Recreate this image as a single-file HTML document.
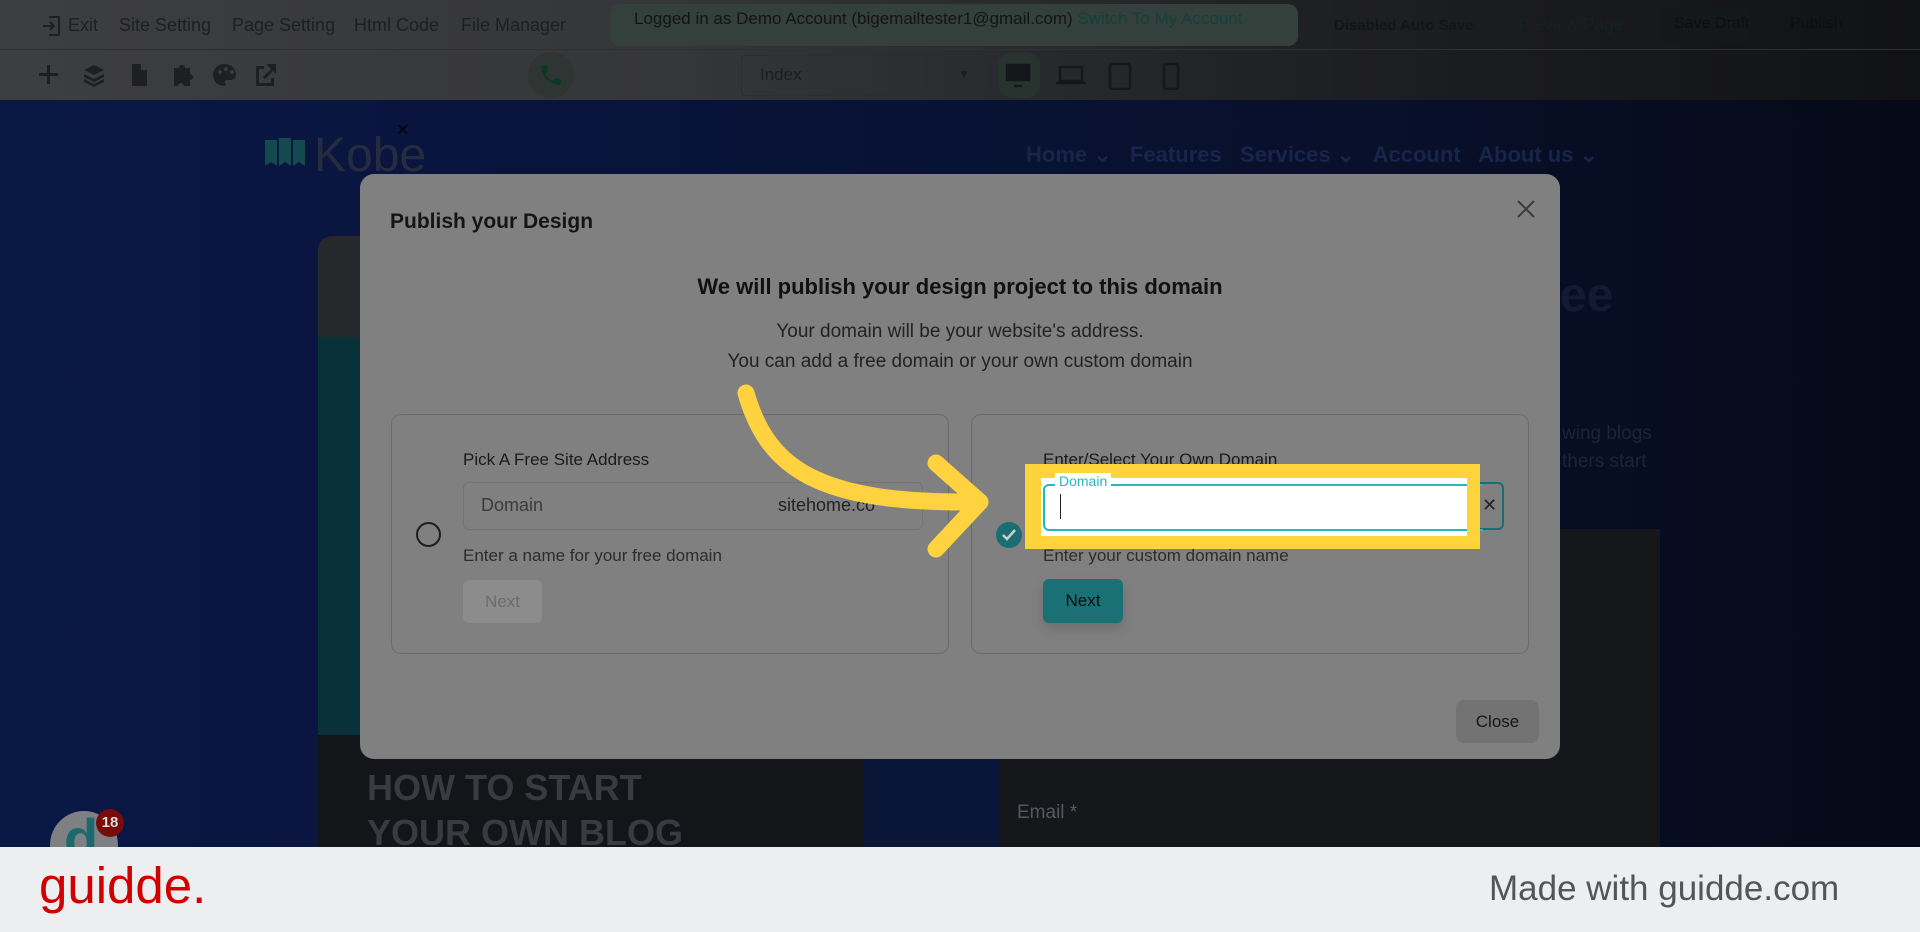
<!DOCTYPE html>
<html><head><meta charset="utf-8"><style>
*{box-sizing:border-box;margin:0;padding:0}
body{width:1920px;height:932px;overflow:hidden;position:relative;font-family:"Liberation Sans",sans-serif;background:#08102a}
.abs{position:absolute}
#tb{left:0;top:0;width:1920px;height:100px;background:linear-gradient(90deg,#3d3e41 0%,#35363a 35%,#1e1f22 70%,#111214 100%)}
#tb .r1{position:absolute;top:0;left:0;width:1920px;height:50px;border-bottom:1px solid #2f3033}
.t{position:absolute;font-size:18px;color:#1d1f22;white-space:nowrap}
#page{left:0;top:100px;width:1920px;height:747px;background:linear-gradient(90deg,#0a1846 0%,#09143c 30%,#08102c 70%,#060a17 100%)}
#modal{left:360px;top:174px;width:1200px;height:585px;background:#808080;border-radius:14px}
.card{position:absolute;top:240px;width:558px;height:240px;border:1px solid #6c6c6c;border-radius:10px}
#footer{left:0;top:847px;width:1920px;height:85px;background:#eceef0}
</style></head><body>
<div id="tb" class="abs"><div class="r1"></div>
<svg class="abs" style="left:40px;top:14px" width="24" height="24" viewBox="0 0 24 24" fill="none" stroke="#1d1f22" stroke-width="2"><path d="M9 3h10v18H9M3 12h11M10 8l4 4-4 4"/></svg>
<div class="t" style="left:68px;top:15px">Exit</div>
<div class="t" style="left:119px;top:15px">Site Setting</div>
<div class="t" style="left:232px;top:15px">Page Setting</div>
<div class="t" style="left:354px;top:15px">Html Code</div>
<div class="t" style="left:461px;top:15px">File Manager</div>
<div class="abs" style="left:610px;top:4px;width:688px;height:42px;background:#34403b;border-radius:10px"></div>
<div class="t" style="left:634px;top:9px;font-size:17px;color:#121416">Logged in as Demo Account (bigemailtester1@gmail.com) <span style="color:#15403a">Switch To My Account</span></div>
<div class="t" style="left:1334px;top:17px;font-size:15px;font-weight:bold;color:#141517">Disabled Auto Save</div>
<div class="t" style="left:1518px;top:15px;font-size:17px;color:#152220">Preview Page</div>
<div class="abs" style="left:1660px;top:8px;width:90px;height:34px;background:#15181a;border-radius:6px"></div>
<div class="t" style="left:1674px;top:15px;font-size:16px;color:#0d0e10">Save Draft</div>
<div class="t" style="left:1790px;top:15px;font-size:16px;color:#0d0e10">Publish</div>
<svg class="abs" style="left:36px;top:62px" width="250" height="26" viewBox="0 0 250 26" fill="#1d1f22">
<path d="M11 3h3v8h8v3h-8v8h-3v-8H3v-3h8z"/>
<path d="M58 3l10 5-10 5-10-5zM48 12l10 5 10-5v3l-10 5-10-5zM48 17l10 5 10-5v3l-10 5-10-5z"/>
<path d="M96 2h9l6 6v16H96zM105 2v6h6" />
<path d="M138 6h5a3 3 0 016 0h5v6a3 3 0 010 6v6h-6a3 3 0 00-6 0h-4z"/>
<path d="M188 2a11 11 0 100 22c2 0 2-2 1-3s0-3 2-3h4a5 5 0 005-5c0-6-5-11-12-11zM182 10a2 2 0 110 .1zM188 7a2 2 0 110 .1zM194 10a2 2 0 110 .1z"/>
<path d="M228 4h-8v20h18v-8h-3v5h-12V7h5zM230 2h10v10l-3-3-8 8-2-2 8-8z"/>
</svg>
<div class="abs" style="left:528px;top:52px;width:46px;height:46px;border-radius:50%;background:#2e3533"></div>
<svg class="abs" style="left:538px;top:62px" width="26" height="26" viewBox="0 0 24 24"><path fill="#0b3a22" d="M6.6 10.8a15 15 0 006.6 6.6l2.2-2.2a1 1 0 011-.25 11.4 11.4 0 003.6.57 1 1 0 011 1V20a1 1 0 01-1 1A17 17 0 013 4a1 1 0 011-1h3.5a1 1 0 011 1c0 1.25.2 2.45.57 3.57a1 1 0 01-.25 1z"/></svg>
<div class="abs" style="left:741px;top:55px;width:245px;height:41px;border:1px solid #2c2d30;border-radius:4px"></div>
<div class="t" style="left:760px;top:65px;font-size:17px;color:#1c1d20">Index</div>
<div class="t" style="left:958px;top:67px;font-size:12px;color:#1c1d20">▼</div>
<div class="abs" style="left:998px;top:52px;width:42px;height:46px;border-radius:14px;background:#283330"></div>
<svg class="abs" style="left:1004px;top:62px" width="190" height="28" viewBox="0 0 190 28" fill="none" stroke="#15171a" stroke-width="2.5"><rect x="3" y="3" width="22" height="15" fill="#15171a"/><path d="M10 24h8"/><rect x="56" y="5" width="22" height="14"/><path d="M52 21h30"/><rect x="106" y="2" width="20" height="25" rx="2"/><rect x="160" y="2" width="14" height="25" rx="2"/></svg>
<div class="abs" style="left:1660px;top:64px;width:20px;height:20px;border:2px solid #17181a;border-radius:50%"></div>
<div class="abs" style="left:1820px;top:64px;width:16px;height:22px;border:2px solid #141516;border-radius:2px"></div>
</div>

<div id="page" class="abs">
<svg class="abs" style="left:263px;top:36px" width="46" height="36" viewBox="0 0 46 36"><path fill="#124a4d" d="M2 4h12v26l-6-4-6 4zM16 2h12v28l-6-4-6 4zM30 4h12v26l-6-4-6 4z"/></svg>
<div class="t" style="left:314px;top:28px;font-size:48px;color:#262c40;font-weight:500">Kobe</div>
<div class="t" style="left:396px;top:20px;font-size:16px;color:#000">✕</div>
<div class="t" style="left:1026px;top:42px;font-size:22px;font-weight:bold;color:#18244a">Home ⌄&nbsp;&nbsp; Features&nbsp;&nbsp; Services ⌄&nbsp;&nbsp; Account&nbsp;&nbsp; About us ⌄</div>
<div class="abs" style="left:318px;top:136px;width:546px;height:102px;background:#26282c;border-radius:14px 14px 0 0"></div>
<div class="abs" style="left:318px;top:237px;width:546px;height:398px;background:#08313a"></div>
<div class="abs" style="left:318px;top:635px;width:546px;height:112px;background:#131519"></div>
<div class="abs" style="left:864px;top:635px;width:135px;height:112px;background:#0a1638"></div>
<div class="t" style="left:367px;top:665px;font-size:36px;font-weight:bold;color:#393b40;line-height:45px">HOW TO START<br>YOUR OWN BLOG</div>
<div class="abs" style="left:999px;top:429px;width:661px;height:318px;background:#15171b"></div>
<div class="t" style="left:1017px;top:702px;font-size:19px;color:#55585d">Email *</div>
<div class="t" style="left:1560px;top:168px;font-size:48px;font-weight:bold;color:#121a36">ee</div>
<div class="t" style="left:1562px;top:320px;font-size:19px;color:#1c2438;line-height:28px">wing blogs<br>thers start</div>
</div>

<div class="abs" style="left:50px;top:811px;width:68px;height:68px;border-radius:50%;background:#7f8084"></div>
<div class="t" style="left:64px;top:806px;font-size:56px;color:#1a6a70;font-weight:bold">d</div>
<div class="abs" style="left:96px;top:809px;width:28px;height:28px;border-radius:50%;background:#7a0b0b;color:#ddd;font-size:15px;font-weight:bold;text-align:center;line-height:28px">18</div>

<div id="modal" class="abs">
<div class="t" style="left:30px;top:36px;font-size:21px;font-weight:bold;color:#151515">Publish your Design</div>
<svg class="abs" style="left:1155px;top:24px" width="22" height="22" viewBox="0 0 22 22" stroke="#3a3a3a" stroke-width="2"><path d="M3 3l16 16M19 3L3 19"/></svg>
<div class="t" style="left:0;width:1200px;text-align:center;top:100px;font-size:22px;font-weight:bold;color:#111">We will publish your design project to this domain</div>
<div class="t" style="left:0;width:1200px;text-align:center;top:143px;font-size:19px;color:#222;line-height:30px">Your domain will be your website's address.<br>You can add a free domain or your own custom domain</div>
<div class="card" style="left:31px">
 <div class="abs" style="left:24px;top:107px;width:25px;height:25px;border:2px solid #1d1d1d;border-radius:50%"></div>
 <div class="t" style="left:71px;top:35px;font-size:17px;font-weight:500;color:#1a1a1a">Pick A Free Site Address</div>
 <div class="abs" style="left:71px;top:67px;width:460px;height:48px;border:1px solid #747474;border-radius:6px"></div>
 <div class="t" style="left:89px;top:80px;font-size:18px;color:#3a3a3a">Domain</div>
 <div class="t" style="left:386px;top:80px;font-size:18px;color:#222">sitehome.co</div>
 <div class="t" style="left:71px;top:131px;font-size:17px;color:#2c2c2c">Enter a name for your free domain</div>
 <div class="abs" style="left:71px;top:165px;width:79px;height:43px;border-radius:6px;background:#8c8c8c;color:#6c6c6c;font-size:17px;text-align:center;line-height:43px">Next</div>
</div>
<div class="card" style="left:611px">
 <div class="abs" style="left:24px;top:107px;width:26px;height:26px;background:#1a6d72;border-radius:50%"></div>
 <svg class="abs" style="left:29px;top:113px" width="16" height="14" viewBox="0 0 16 14"><path d="M2 7l4 4 8-9" stroke="#ccc" stroke-width="2.5" fill="none"/></svg>
 <div class="t" style="left:71px;top:35px;font-size:17px;font-weight:500;color:#1a1a1a">Enter/Select Your Own Domain</div>
 <div class="abs" style="left:71px;top:67px;width:461px;height:48px;border:2px solid #1a6d72;border-radius:6px"></div>
 <div class="t" style="left:510px;top:80px;font-size:18px;color:#222">✕</div>
 <div class="t" style="left:71px;top:131px;font-size:17px;color:#2c2c2c">Enter your custom domain name</div>
 <div class="abs" style="left:71px;top:164px;width:80px;height:44px;border-radius:6px;background:#1a7075;color:#0c0c0c;font-size:17px;font-weight:500;text-align:center;line-height:44px;box-shadow:0 6px 12px rgba(0,0,0,.15)">Next</div>
</div>
<div class="abs" style="left:1096px;top:526px;width:83px;height:43px;border-radius:8px;background:#737373;color:#151515;font-size:17px;font-weight:500;text-align:center;line-height:43px">Close</div>
</div>

<div class="abs" style="left:1025px;top:464px;width:455px;height:85px;background:#ffd43b"></div>
<div class="abs" style="left:1041px;top:478px;width:426px;height:58px;background:#fff"></div>
<div class="abs" style="left:1043px;top:484px;width:440px;height:47px;border:2px solid #25b8c4;border-right:none;border-radius:6px 0 0 6px"></div>
<div class="abs" style="left:1055px;top:473px;padding:0 4px;background:#fff;font-size:14px;color:#25b8c4">Domain</div>
<div class="abs" style="left:1060px;top:494px;width:1px;height:25px;background:#222"></div>
<div class="abs" style="left:1467px;top:478px;width:13px;height:58px;background:#ffd43b"></div>

<svg class="abs" style="left:0;top:0" width="1920" height="932"><g fill="none" stroke="#ffd23f" stroke-width="17" stroke-linecap="round" stroke-linejoin="round"><path d="M746 393 C768 470 820 503 972 502"/><path d="M936 463 L980 502 L936 549"/></g></svg>

<div id="footer" class="abs">
<div class="t" style="left:39px;top:9px;font-size:51px;color:#d00000">guidde.</div>
<div class="t" style="left:1489px;top:22px;font-size:35px;color:#555">Made with guidde.com</div>
</div>
</body></html>
